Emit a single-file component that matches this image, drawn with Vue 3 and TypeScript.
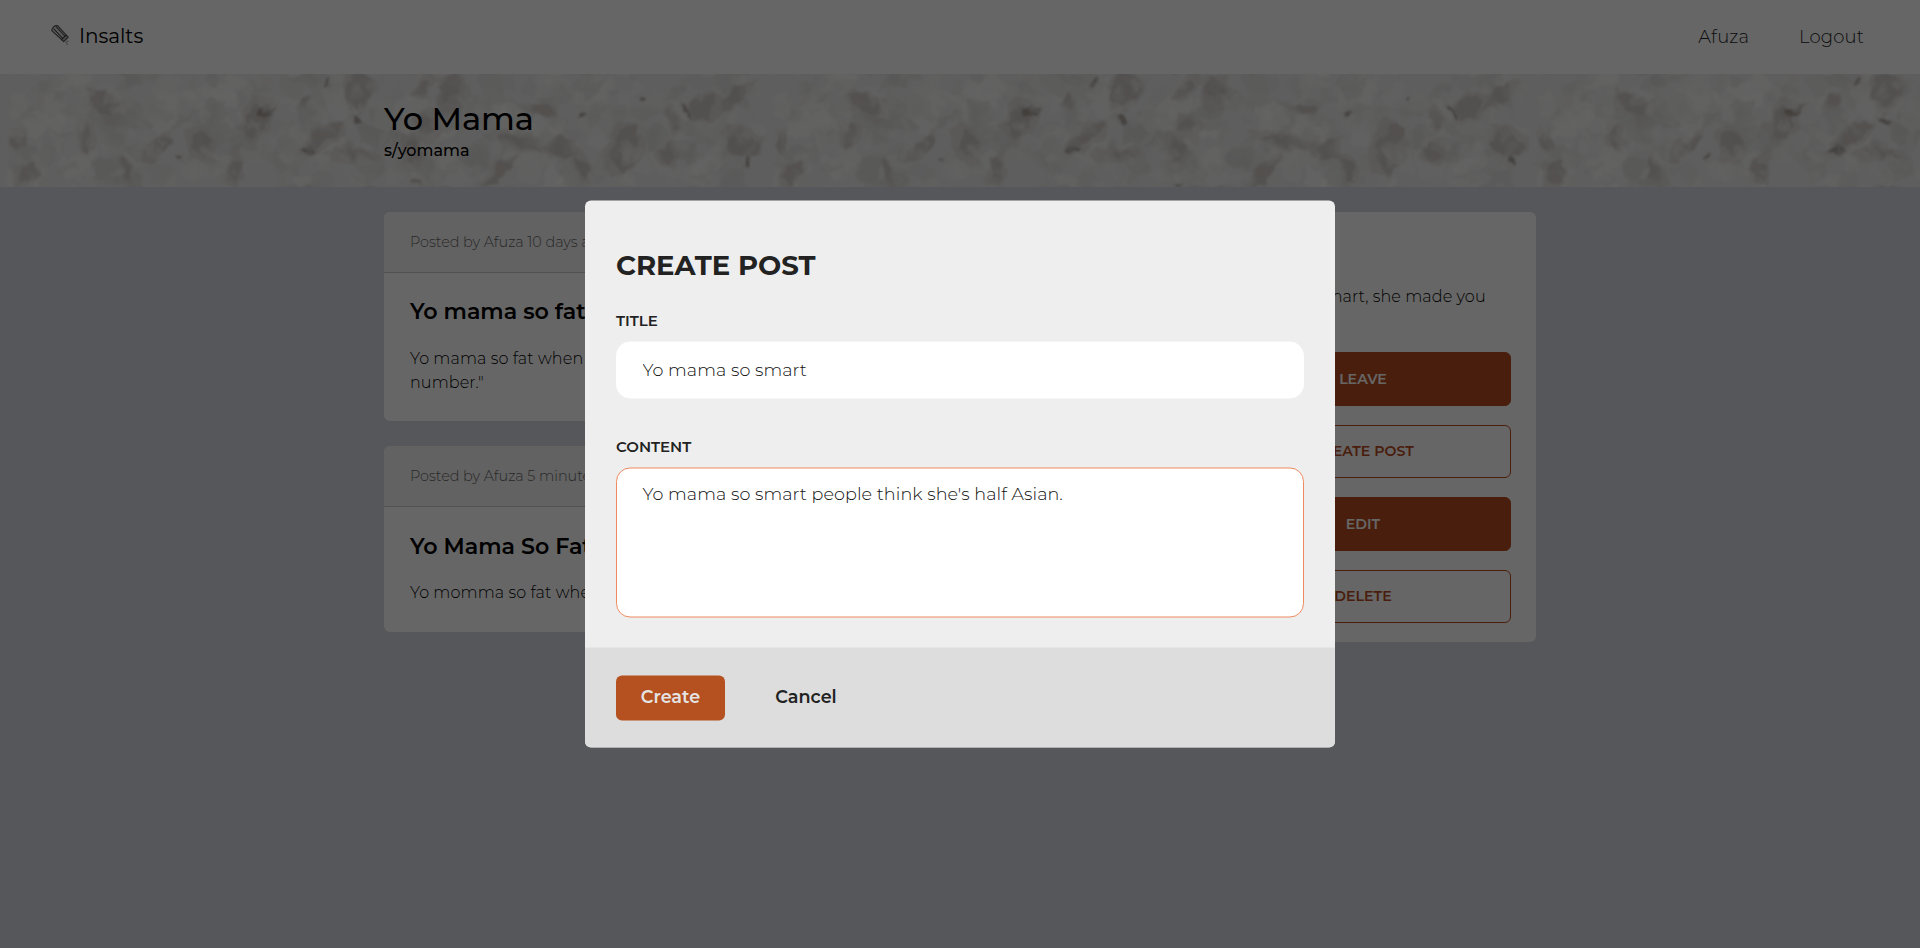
<script setup lang="ts">
import { ref } from 'vue'

interface Post {
  meta: string
  title: string
  lines: string[]
}

interface Patch {
  x: number
  y: number
  rx: number
  ry: number
  a: number
  dark?: boolean
}

interface Shape {
  points: string
  fill: string
  opacity: number
}

const posts: Post[] = [
  {
    meta: 'Posted by Afuza 10 days ago',
    title: 'Yo mama so fat',
    lines: ['Yo mama so fat when she stepped on the scale it showed my phone', 'number."'],
  },
  {
    meta: 'Posted by Afuza 5 minutes ago',
    title: 'Yo Mama So Fat',
    lines: ['Yo momma so fat when she sat on the rainbow, skittles popped out.'],
  },
]

const actions = [
  { label: 'LEAVE', solid: true },
  { label: 'CREATE POST', solid: false },
  { label: 'EDIT', solid: true },
  { label: 'DELETE', solid: false },
]

const title = ref('Yo mama so smart')
const content = ref("Yo mama so smart people think she's half Asian.")

// Shadows between the salt crystals, within one 764px wide tile
const patches: Patch[] = [
  { x: 104, y: 31, rx: 16, ry: 12, a: 20 }, { x: 86, y: 63, rx: 6, ry: 14, a: 0 },
  { x: 202, y: 70, rx: 9, ry: 14, a: -20 }, { x: 254, y: 48, rx: 10, ry: 18, a: 20 },
  { x: 266, y: 36, rx: 9, ry: 5, a: -30, dark: true }, { x: 309, y: 76, rx: 7, ry: 6, a: 0, dark: true },
  { x: 325, y: 62, rx: 20, ry: 7, a: -35 }, { x: 358, y: 16, rx: 13, ry: 20, a: 10 },
  { x: 358, y: 47, rx: 8, ry: 3, a: 30, dark: true }, { x: 423, y: 14, rx: 12, ry: 5, a: -50 },
  { x: 452, y: 17, rx: 8, ry: 17, a: 0 }, { x: 424, y: 52, rx: 8, ry: 11, a: -30 },
  { x: 411, y: 75, rx: 8, ry: 13, a: 0 }, { x: 355, y: 80, rx: 15, ry: 6, a: 0 },
  { x: 520, y: 67, rx: 20, ry: 7, a: 15 }, { x: 564, y: 74, rx: 12, ry: 9, a: 20 },
  { x: 581, y: 41, rx: 5, ry: 3, a: -30, dark: true }, { x: 625, y: 76, rx: 12, ry: 25, a: 15 },
  { x: 499, y: 99, rx: 18, ry: 6, a: -45 }, { x: 687, y: 38, rx: 2, ry: 9, a: -30, dark: true },
  { x: 706, y: 32, rx: 14, ry: 9, a: -35 }, { x: 742, y: 70, rx: 16, ry: 11, a: 20 },
  { x: 747, y: 88, rx: 3, ry: 6, a: 20, dark: true }, { x: 643, y: 24, rx: 2, ry: 2, a: 0, dark: true },
  { x: 233, y: 97, rx: 7, ry: 14, a: 10 }, { x: 178, y: 83, rx: 2, ry: 2, a: 0, dark: true },
  { x: 28, y: 99, rx: 8, ry: 12, a: 20 }, { x: 18, y: 69, rx: 6, ry: 11, a: -20 },
  { x: 735, y: 22, rx: 17, ry: 6, a: -45 }, { x: 330, y: 8, rx: 2, ry: 6, a: 25, dark: true },
  { x: 305, y: 27, rx: 5, ry: 7, a: 20 }, { x: 160, y: 72, rx: 13, ry: 6, a: -40 },
  { x: 540, y: 35, rx: 14, ry: 4, a: 5 }, { x: 670, y: 78, rx: 9, ry: 8, a: 30 },
  { x: 585, y: 97, rx: 5, ry: 14, a: -20 }, { x: 125, y: 98, rx: 4, ry: 13, a: -10 },
  { x: 672, y: 45, rx: 5, ry: 10, a: -20 }, { x: 417, y: 110, rx: 8, ry: 2, a: 0, dark: true },
]

let seed = 4711
function rand(): number {
  seed = (seed * 16807) % 2147483647
  return seed / 2147483647
}

// Irregular polygon around a centre, stretched and rotated like its ellipse
function polygon(x: number, y: number, rx: number, ry: number, deg: number, corners: number): string {
  const rot = (deg * Math.PI) / 180
  return Array.from({ length: corners }, (_, i) => {
    const t = ((i + rand() * 0.6) / corners) * Math.PI * 2
    const r = 0.75 + rand() * 0.55
    const px = Math.cos(t) * rx * r
    const py = Math.sin(t) * ry * r
    return `${(x + px * Math.cos(rot) - py * Math.sin(rot)).toFixed(1)},${(y + px * Math.sin(rot) + py * Math.cos(rot)).toFixed(1)}`
  }).join(' ')
}

function chips(count: number, size: number, low: number, high: number, opacity: number): Shape[] {
  return Array.from({ length: count }, () => {
    const tone = Math.round(low + rand() * (high - low))
    return {
      points: polygon(12 + rand() * 740, rand() * 113, size * (0.5 + rand()), size * (0.4 + rand() * 0.7), rand() * 180, 5),
      fill: `rgb(${tone}, ${tone}, ${tone - 2})`,
      opacity,
    }
  })
}

const crystals: Shape[] = [
  ...chips(260, 15, 216, 252, 0.6),
  ...patches.map((p) => ({
    points: polygon(p.x, p.y, p.rx * 1.6, p.ry * 1.4, p.a, 7),
    fill: '#d3cdc8',
    opacity: p.dark ? 0.3 : 0.45,
  })),
  ...patches.map((p) => ({
    points: polygon(p.x, p.y, p.rx, p.ry, p.a, p.dark ? 5 : 8),
    fill: p.dark ? '#958b85' : '#c4bdb7',
    opacity: p.dark ? 0.7 : 0.6,
  })),
  ...chips(300, 8, 214, 252, 0.35),
]
</script>

<template>
  <div class="page">
    <header class="topbar">
      <div class="brand">
        <svg class="logo" viewBox="0 0 20 22" aria-hidden="true">
          <g fill="none" stroke="#4a4a4a" stroke-width="1.1" stroke-linejoin="round">
            <path d="M1.8 6.6 Q1.8 4.6 3.6 2.9 Q5.6 1.2 7.8 1.8 L16.2 11 L11.6 15.6 Z" fill="#e4e4e4" />
            <path d="M3.6 4.6 L12.7 14.4 M6 2.6 L15 12.2" />
            <path d="M11.6 15.6 L13.6 17.6 L18.2 13.2 L16.2 11 Z" fill="#bbb" />
          </g>
          <path d="M15.4 17.6h1.4v1.4h-1.4zM17.2 16.6h1.2v1.4h-1.2zM16.4 19.4h1.5v1.3h-1.5z" fill="#999" />
        </svg>
        <span class="brand-name">Insalts</span>
      </div>
      <nav class="links">
        <a class="user">Afuza</a>
        <a class="logout">Logout</a>
      </nav>
    </header>

    <section class="banner">
      <svg class="salt" width="1920" height="113" aria-hidden="true">
        <defs>
          <filter id="rough" x="0" y="0" width="100%" height="100%" color-interpolation-filters="sRGB">
            <feTurbulence type="fractalNoise" baseFrequency="0.06" numOctaves="4" seed="8" result="n" />
            <feDisplacementMap in="SourceGraphic" in2="n" scale="14" xChannelSelector="R" yChannelSelector="G" />
            <feGaussianBlur stdDeviation="0.8" />
          </filter>
          <pattern id="tile" width="764" height="113" patternUnits="userSpaceOnUse">
            <rect width="764" height="113" fill="#edecec" />
            <polygon
              v-for="(c, i) in crystals"
              :key="i"
              :points="c.points"
              :fill="c.fill"
              :opacity="c.opacity"
            />
          </pattern>
        </defs>
        <rect width="1920" height="113" fill="#edecec" />
        <rect x="-20" y="-20" width="1960" height="153" fill="url(#tile)" filter="url(#rough)" />
      </svg>
      <div class="banner-text">
        <h1>Yo Mama</h1>
        <p>s/yomama</p>
      </div>
    </section>

    <main class="container">
      <div class="posts">
        <article v-for="post in posts" :key="post.title" class="card">
          <div class="meta">{{ post.meta }}</div>
          <div class="post-body">
            <h2>{{ post.title }}</h2>
            <p v-for="line in post.lines" :key="line">{{ line }}</p>
          </div>
        </article>
      </div>
      <aside class="card about">
        <h3>ABOUT</h3>
        <p>Yo mama so smart, she made you<br />smart.</p>
        <div class="actions">
          <button v-for="a in actions" :key="a.label" :class="{ solid: a.solid }">{{ a.label }}</button>
        </div>
      </aside>
    </main>

    <div class="overlay">
      <form class="modal" @submit.prevent>
        <div class="modal-body">
          <h2>CREATE POST</h2>
          <label for="title">TITLE</label>
          <input id="title" v-model="title" type="text" />
          <label for="content" class="second">CONTENT</label>
          <textarea id="content" v-model="content" spellcheck="false"></textarea>
        </div>
        <footer>
          <button class="create" type="submit">Create</button>
          <button class="cancel" type="button">Cancel</button>
        </footer>
      </form>
    </div>
  </div>
</template>

<style>
body {
  margin: 0;
  background: #d8dae3;
}
</style>

<style scoped>
.page,
.page * {
  box-sizing: border-box;
}
.page {
  height: 948px;
  overflow: hidden;
  font-family: Montserrat, Inter, 'Open Sans', sans-serif;
  font-weight: 300;
  color: #000;
}
h1,
h2,
h3,
p {
  margin: 0;
  white-space: nowrap;
}
button,
input,
textarea {
  font-family: inherit;
}
.topbar {
  height: 74px;
  padding: 0 56px 0 50px;
  display: flex;
  align-items: center;
  justify-content: space-between;
  background: #fff;
}
.brand {
  display: flex;
  align-items: center;
  gap: 9px;
  padding-bottom: 2px;
}
.logo {
  width: 20px;
  height: 22px;
  margin-bottom: 2px;
}
.brand-name {
  font-size: 20px;
  font-weight: 400;
}
.links {
  display: flex;
  gap: 50px;
  font-size: 18px;
  letter-spacing: 0.12px;
  color: #222;
}
.banner {
  height: 113px;
  display: grid;
  overflow: hidden;
}
.salt,
.banner-text {
  grid-area: 1 / 1;
}
.banner-text {
  z-index: 1;
  padding: 24px 0 0 384px;
}
h1 {
  font-size: 32px;
  line-height: 42px;
  font-weight: 550;
  letter-spacing: -0.08px;
}
.banner-text p {
  font-size: 16px;
  line-height: 22px;
  font-weight: 550;
}
.container {
  width: 1152px;
  margin: 25px auto 0;
  display: grid;
  grid-template-columns: 1fr 346px;
  gap: 25px;
  align-items: start;
}
.posts {
  display: grid;
  gap: 25px;
}
.card {
  background: #fff;
  border-radius: 6px;
  overflow: hidden;
}
.meta {
  height: 61px;
  padding: 0 26px;
  line-height: 60px;
  font-size: 14.4px;
  letter-spacing: -0.04px;
  color: #666;
  background: #f4f4f4;
  border-bottom: 1px solid #ccc;
}
.post-body {
  padding: 22.4px 26px 26.4px;
}
.post-body h2 {
  font-size: 22.2px;
  line-height: 33px;
  font-weight: 600;
  letter-spacing: -0.05px;
  margin-bottom: 18.6px;
}
.post-body p {
  font-size: 16px;
  line-height: 24px;
  letter-spacing: 0.1px;
}
.about p {
  font-size: 16px;
  line-height: 24px;
  letter-spacing: 0.1px;
}
.about {
  height: 430px;
  padding: 25px;
}
.about h3 {
  font-size: 20px;
  line-height: 30px;
  margin-bottom: 18px;
}
.actions {
  margin-top: 19px;
  display: grid;
  grid-auto-rows: 54px;
  gap: 18.6px;
}
.actions button {
  height: 53px;
  border: 1px solid #b94b1e;
  border-radius: 6px;
  background: #fff;
  color: #b94b1e;
  font-size: 14.2px;
  font-weight: 600;
}
.actions .solid {
  height: 54px;
  background: #b94b1e;
  color: #fff;
}
.overlay {
  position: absolute;
  inset: 0;
  background: rgba(0, 0, 0, 0.6);
}
.modal {
  position: absolute;
  top: 50%;
  left: 50%;
  transform: translate(-50%, -50%);
  width: 750px;
  height: 547px;
  border-radius: 6px;
  overflow: hidden;
  background: #eee;
  color: #222;
}
.modal-body {
  height: 447px;
  padding: 46px 31px 0;
  display: flex;
  flex-direction: column;
}
.modal-body h2 {
  font-size: 27.5px;
  line-height: 37px;
  font-weight: 700;
}
label {
  font-size: 15px;
  line-height: 20px;
  font-weight: 600;
  margin-top: 27px;
}
label.second {
  margin-top: 38px;
}
input,
textarea {
  width: 688px;
  margin-top: 11px;
  border: 1px solid #fff;
  border-radius: 14px;
  background: #fff;
  color: #111;
  font-size: 17.6px;
  letter-spacing: 0.07px;
  font-weight: 300;
  outline: none;
  resize: none;
}
input {
  height: 57px;
  padding: 0 25px 2px 25.5px;
}
textarea {
  height: 150px;
  padding: 12px 25px 0 25.5px;
  line-height: 25px;
  border-color: #ee8a5e;
}
footer {
  height: 100px;
  padding: 0 31px;
  display: flex;
  align-items: center;
  background: #ddd;
}
footer button {
  height: 45px;
  border: 0;
  padding: 0 0 3px;
  border-radius: 6px;
  font-size: 17.6px;
  font-weight: 600;
}
.create {
  width: 109px;
  background: #b55020;
  color: #e4e4e4;
}
.cancel {
  width: 162px;
  background: none;
  color: #222;
}
</style>
